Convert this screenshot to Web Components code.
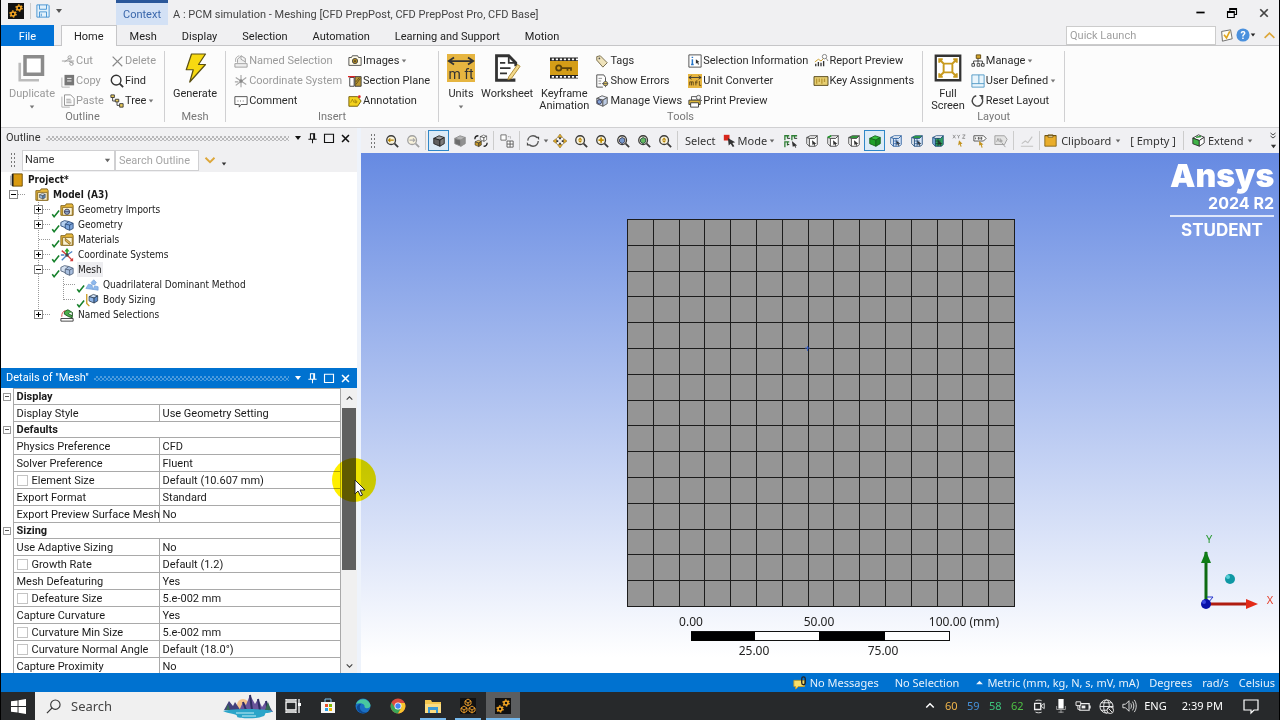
<!DOCTYPE html>
<html lang="en">
<head>
<meta charset="utf-8">
<meta name="viewport" content="width=device-width, initial-scale=1">
<title>A : PCM simulation - Meshing</title>
<style>
    html, body { height: 100%; }
    body {
        --wide-font: "Noto Sans", "Open Sans", sans-serif;
        margin: 0;
        background: #000;
        color: #222;
        font: 11px/14px Roboto, "Open Sans", sans-serif;
        overflow: hidden;
    }
    desktop-app { height: 100%; }
</style>
</head>
<body>
<desktop-app></desktop-app>

<script>
// 16x16 drawings, looked up by name
const CUBE = (top, left, right, line = '#333') =>
    `<g stroke="${line}" stroke-width="1" stroke-linejoin="round"><path fill="${top}" d="M2 5l6-3 6 2-5 3z"/><path fill="${left}" d="M2 5l7 2v7l-7-3z"/><path fill="${right}" d="M9 7l5-3v7l-5 3z"/></g>`;
const WIRE = (top, front, side, line = '#444') =>
    `<g stroke="${line}" stroke-width="1" stroke-linejoin="round"><path fill="${top}" d="M2 4l4-2h8l-3 3H5z"/><path fill="${side}" d="M2 4l3 1v9l-3-3z"/><path fill="${front}" d="M5 5h6l3-3v10l-2 2H5z"/></g><path d="M8 7l5 4-2 .3 1 2-1 .4-1-2-1.500 1z" fill="#333"/>`;
const LENS = (inner, line = '#3a3a3a') =>
    `<circle cx="7" cy="7" r="5" fill="#f8f2dc" stroke="${line}" stroke-width="1.500"/><path d="M11 11l4 4" stroke="${line}" stroke-width="2"/>${inner}`;
const FOLDER = inner =>
    `<path d="M1 14V3h5l1-2h7l1 2v11z" fill="#e8b93c" stroke="#7a5a10"/><path d="M3 5h11v9H3z" fill="#fbf3d4" stroke="#8a6a20"/>${inner}`;
const GEAR = (x, y, r) =>
    `<circle cx="${x}" cy="${y}" r="${r}" fill="none" stroke="#f5a623" stroke-width="1.500"/><circle cx="${x}" cy="${y}" r="${r + 1}" fill="none" stroke="#f5a623" stroke-width="1.500" stroke-dasharray="1.500 1.700"/>`;
const BOOK = '<path d="M3 1h11v14H3z" fill="#d99a10" stroke="#6a4c08"/><path d="M3 1v14" stroke="#222" stroke-width="2"/><path d="M1 3v11" stroke="#777"/>';
const MFT = '<path d="M0 0h16v16H0z" fill="#e6b540"/><path d="M1 4h14M4 2L1 4l3 2M12 2l3 2-3 2" stroke="#333" fill="none"/>';

const ICONS = {
    app: `<path d="M0 0h16v16H0z" fill="#111"/>${GEAR(5, 11, 2)}${GEAR(11, 5, 2)}`,
    modules: '<path d="M0 0h16v16H0z" fill="#111"/><g fill="none" stroke="#e59a2c"><path d="M8 1l3 2v3L8 8 5 6V3zM4 8l3 2v3l-3 2-3-2v-3zM12 8l3 2v3l-3 2-3-2v-3zM5 3l3 2 3-2M8 5v3M1 10l3 2 3-2M4 12v3M9 10l3 2 3-2M12 12v3"/></g>',
    save: '<path d="M1 1h13l1 1v13H1z" fill="#e3f1fb" stroke="#3c8ed0"/><path d="M4 1v5h8V1M4 15V9h8v6M6 11v3" fill="none" stroke="#3c8ed0"/>',
    duplicate: '<path d="M1 5v10h11" fill="none" stroke="#bbb" stroke-width="1.500"/><path d="M4 1.500h10v10H4z" fill="#fff" stroke="#8b8b8b" stroke-width="2"/>',
    cut: '<path d="M1 8h14M4 9l7-5M9 8l5 3" stroke="#999"/><circle cx="10" cy="4" r="2" fill="none" stroke="#999"/><circle cx="12" cy="11" r="2" fill="none" stroke="#999"/>',
    copy: '<path d="M1 4v11h9" fill="none" stroke="#aaa"/><path d="M4 1h11v12H4z" fill="#777"/><path d="M7 5h5M7 8h5" stroke="#fff"/>',
    paste: '<path d="M1 3v12h9" fill="none" stroke="#aaa"/><path d="M4 1h7l4 4v8H4z" fill="#fff" stroke="#888"/><path d="M6 6h5M6 8h6M6 10h6" stroke="#999"/>',
    delete: '<path d="M3 3l11 11M14 3L3 14" stroke="#888" stroke-width="1.300"/>',
    find: '<circle cx="7" cy="7" r="5.500" fill="none" stroke="#333" stroke-width="1.600"/><path d="M11 11l4 4" stroke="#333" stroke-width="2"/>',
    tree: '<path d="M3 4v4h4M8 9v4h4" fill="none" stroke="#333"/><path d="M1 1h4v3H1zM6 6h4v3H6zM11 11h4v4h-4z" fill="#e7c95a" stroke="#333"/>',
    bolt: '<path d="M6 0h8l-4 6h4L5 16l2-7H3z" fill="#f7d911" stroke="#5b5014" stroke-width=".7" stroke-linejoin="round"/>',
    named: '<path d="M1 11h14v4H1zM4 10V6l4-4 5 3v5M8 2v4l5 3" fill="#eee" stroke="#999"/><path d="M2 9c-1-4 1-6 4-7" fill="none" stroke="#999"/>',
    axes: '<path d="M8 1v14M2 4l12 8M2 13l12-9M1 9h4" stroke="#a5a5a5" stroke-width="1.300"/><circle cx="8" cy="8" r="2" fill="#888"/>',
    comment: '<path d="M1 3h14v9H8l-2 3v-3H1z" fill="#fff" stroke="#444"/><path d="M4 8h1M7 8h1M10 8h1" stroke="#444"/>',
    camera: '<path d="M1 4h3l1-2h6l1 2h3v9H1z" fill="#fffbe9" stroke="#444"/><circle cx="8" cy="8" r="3" fill="#b08920" stroke="#444"/><circle cx="8" cy="8" r="1" fill="#333"/>',
    section: '<path d="M2 4h5v10H2z" fill="#fff" stroke="#333"/><path d="M8 3h7v11H8z" fill="#b99734" stroke="#333"/><path d="M9 12l5-7M9 9l4-5" stroke="#5d4a12"/><path d="M0 3h8" stroke="#d22" stroke-width="1.500"/>',
    annotation: '<path d="M1 3h10l4 5-4 6H1z" fill="#f4d21d" stroke="#6d5600"/><path d="M3 10l2-4 2 4M8 6v4h2V8H8" fill="none" stroke="#8b6d00" stroke-width=".7"/><circle cx="13" cy="3" r="1.500" fill="#d22"/>',
    units: `${MFT}<text x="8" y="14" font-size="8" text-anchor="middle" fill="#333">m ft</text>`,
    unitsmall: `${MFT}<path d="M2 13V9h2v4M4 9h2v4M9 13V8h2M8 10h3M13 8v5h2" stroke="#5f4614" fill="none"/>`,
    worksheet: '<path d="M12 14v1H2V1h7l4 4v2" fill="#fff" stroke="#333" stroke-width="1.600"/><path d="M9 1v4h4M4 5h3M4 8h6M4 11h4" stroke="#333" fill="none"/><path d="M9 13l5-7 1.500 1-5 7-2 .6z" fill="#f3d98a" stroke="#a98428" stroke-width=".5"/>',
    keyframe: '<path d="M0 2h16v12H0z" fill="#222"/><path d="M0 4h16v8H0z" fill="#d49d17"/><path d="M1 3h15M1 13h15" stroke="#fff" stroke-width="1" stroke-dasharray="1.300 1"/><circle cx="5" cy="8" r="1.500" fill="none" stroke="#5a420a"/><path d="M6.500 8H12v1.500M10 8v1.500" fill="none" stroke="#5a420a"/>',
    tags: '<path d="M2 3l4-1 8 8-5 5-7-8z" fill="#efe3bb" stroke="#6b6040"/><circle cx="5" cy="5" r="1" fill="#555"/>',
    errors: '<path d="M2 1h8l2 3v4M2 1v14h7" fill="none" stroke="#444"/><path d="M4 5h4M4 8h3M4 11h3" stroke="#888"/><circle cx="12" cy="11" r="2.500" fill="#e7c95a" stroke="#555"/><path d="M12 6v3M12 13v2M8 11h7" stroke="#555"/>',
    views: CUBE('#e9eef7', '#d6dfef', '#bccbe3', '#555') + '<circle cx="5" cy="9" r="2.500" fill="#85a5d8" stroke="#335"/>',
    info: '<path d="M1 1h14v14H1z" fill="#fff" stroke="#444"/><path d="M5 6v6M5 3v1.500M3.500 12h3" stroke="#2474c8" stroke-width="1.700"/><path d="M9 6l4 3-1.500.3 1 2.500-1 .4-1-2.200L9 11z" fill="#333"/>',
    print: '<path d="M4 3h7v4H4z" fill="#fff" stroke="#444"/><path d="M1 7h13v5H1z" fill="#e0b93a" stroke="#333"/><path d="M3 10h9v5H3z" fill="#fff" stroke="#333"/><circle cx="12" cy="4" r="2.500" fill="#eee" stroke="#555"/><path d="M14 6l2 2" stroke="#555"/>',
    report: '<path d="M2 14v-3M5 14v-5M8 14v-4M11 14V8" stroke="#333" stroke-width="1.500"/><path d="M1 9l4-3 3 2 4-4" fill="none" stroke="#c79513"/><circle cx="12" cy="3" r="2.500" fill="#fff" stroke="#777"/><path d="M14 5l2 3" stroke="#777"/>',
    keys: '<path d="M0 3h16v10H0z" fill="#e7cf72" stroke="#4a3d0e"/><path d="M3 5v6M6 5v4M9 5v6M12 5v4" stroke="#b99734" stroke-width="1.500"/>',
    full: '<path d="M1 1h14v14H1z" fill="#fff" stroke="#333" stroke-width="1.300"/><g stroke="#c89a1e" fill="none" stroke-width="1.100"><path d="M5.500 5.500h5v5h-5zM3 3l3 3M13 3l-3 3M3 13l3-3M13 13l-3-3M3 5V3h2M11 3h2v2M3 11v2h2M13 11v2h-2"/></g>',
    manage: '<path d="M8 5v5M3 12V8h10v4" fill="none" stroke="#333"/><path d="M6 1h5v4H6z" fill="#d2a42c" stroke="#5a430a"/><path d="M1 11h3v3H1zM7 11h3v3H7zM12 11h3v3h-3z" fill="#fff" stroke="#333"/>',
    layout: '<path d="M1 1h14v14H1zM1 11h14M9 1v10" fill="#e9f5fc" stroke="#4a96c4"/>',
    reset: '<path d="M6 2a6 6 0 1 0 6 2" fill="none" stroke="#444" stroke-width="1.600"/><path d="M9 1h5v5z" fill="#444"/>',
    approve: '<path d="M2 3l11-2 2 11-12 3z" fill="#fffdf3" stroke="#555"/><path d="M5 7l3 4 4-8" fill="none" stroke="#e0a51c" stroke-width="2"/>',
    help: '<circle cx="8" cy="8" r="7.500" fill="#4a90dd"/><text x="8" y="12" text-anchor="middle" font-size="12" font-weight="700" fill="#fff">?</text>',
    up: '<path d="M2 11l6-6 6 6" fill="none" stroke="#dda73a" stroke-width="2"/>',
    down: '<path d="M2 5l6 6 6-6" fill="none" stroke="#dda73a" stroke-width="2.500"/>',
    chevup: '<path d="M3 10l5-5 5 5" fill="none" stroke="currentColor" stroke-width="2"/>',
    chevdown: '<path d="M3 6l5 5 5-5" fill="none" stroke="currentColor" stroke-width="2"/>',
    chevrons: '<path d="M3 2l5 4 5-4M3 8l5 4 5-4" fill="none" stroke="#333" stroke-width="1.800"/>',
    min: '<path d="M2 8h12" stroke="#000" stroke-width="2.500"/>',
    restore: '<path d="M5 5V2h9v8h-3M2 6h9v8H2z" fill="none" stroke="#000" stroke-width="1.500"/><path d="M5 3h9M2 7h9" stroke="#000" stroke-width="2"/>',
    max: '<path d="M2 3h12v11H2z" fill="none" stroke="currentColor" stroke-width="1.500"/>',
    close: '<path d="M3 3l10 10M13 3L3 13" stroke="currentColor" stroke-width="2.300"/>',
    pin: '<path d="M5 1h6v8H5zM2 9h12M8 9v6" fill="none" stroke="currentColor" stroke-width="1.500"/><path d="M10 1v8" stroke="currentColor" stroke-width="2"/>',
    caret: '<path d="M2 4h12l-6 8z" fill="currentColor"/>',
    caretup: '<path d="M2 11h12L8 5z" fill="currentColor"/>',
    book: BOOK,
    model: FOLDER(`<g transform="translate(4 5) scale(.55)">${CUBE('#cfe0f2', '#8fb0d6', '#5c86bb')}</g>`),
    imports: FOLDER('<circle cx="8" cy="10" r="3" fill="#9db7d9" stroke="#335"/><path d="M5 10h6" stroke="#335"/>'),
    geometry: `<g stroke="#2b4a78" stroke-linejoin="round"><path d="M1 5l4-2 5 1v6l-4 1-5-2z" fill="#b7d0ef"/><path d="M6 7l4-3 5 2v6l-4 2-5-2z" fill="#7da6dd"/><path d="M6 7l5 1 4-2M11 8v6" fill="none"/></g>`,
    mesh: `<g stroke="#50617c" stroke-linejoin="round"><path d="M1 5l4-2 5 1v6l-4 1-5-2z" fill="#d4e0ef"/><path d="M6 7l4-3 5 2v6l-4 2-5-2z" fill="#a9bfdf"/><path d="M6 7l5 1 4-2M11 8v6" fill="none"/></g>`,
    materials: FOLDER('<path d="M6 6l6 5-1 2-5-4z" fill="#e5b454" stroke="#8a6a20"/>'),
    coords: '<path d="M8 2v6" stroke="#2ca02c" stroke-width="2"/><path d="M5 4l3-4 3 4z" fill="#2ca02c"/><path d="M8 8l6 6M2 3l6 5" stroke="#d23c3c" stroke-width="1.500"/><path d="M8 8l-6 6M8 8l6-4M1 8h4" stroke="#4a83c4" stroke-width="1.500"/><path d="M11 15h4v-4z" fill="#d23c3c"/><circle cx="8" cy="8" r="2" fill="#444"/>',
    quad: '<path d="M1 12l3-5 4 1 1 5zM7 5l3-3 3 3-2 3-3-1zM9 13l2-4 4 1v4z" fill="#8fb9ec" stroke="#6a99d6" stroke-width=".7"/>',
    sizing: `<path d="M2 1v11l3 3" fill="none" stroke="#c89a1e" stroke-width="1.500"/><g transform="translate(3 0) scale(.82)">${CUBE('#cfe0f5', '#8fb4e6', '#5f8dcc', '#234')}</g>`,
    selections: '<path d="M1 12h14v3H1z" fill="#fff" stroke="#333"/><path d="M5 4l4-2 5 3v6l-4-1-5-3z" fill="#4cb04c" stroke="#1c4f1c"/><path d="M9 6l5 3V5" fill="#fff" stroke="#1c4f1c"/><path d="M2 10c0-4 1-6 4-7" fill="none" stroke="#d23c3c"/>',
    check: '<path d="M2 10l3 4 8-10" fill="none" stroke="#15802a" stroke-width="2.500"/>',
    prev: LENS('<path d="M4 7h6M6 5L4 7l2 2" stroke="#b98500" stroke-width="1.300" fill="none"/>'),
    next: LENS('<path d="M4 7h6M8 5l2 2-2 2" stroke="#aaa" stroke-width="1.300" fill="none"/>', '#a0a0a0'),
    cubeedge: CUBE('#9a9a9a', '#606060', '#7b7b7b', '#222'),
    cube: CUBE('#b5b5b5', '#6c6c6c', '#919191', '#8d8d8d'),
    cubes: `<g transform="translate(6 0) scale(.6)">${CUBE('#fff', '#fff', '#fff', '#222')}</g><g transform="translate(0 6) scale(.6)">${CUBE('#e6c566', '#c89a2a', '#a47c1c', '#222')}</g><path d="M1 6c0-3 1-4 4-4M15 10c0 3-1 4-4 4" fill="none" stroke="#222" stroke-width="1.500"/>`,
    grid: '<path d="M1 1h6v6H1z" fill="#fff" stroke="#666"/><path d="M8 8h7v7H8zM11.500 8v7M8 11.500h7" fill="#fff" stroke="#555"/><path d="M9 3h3v3" fill="none" stroke="#888" stroke-dasharray="1 1"/>',
    rotate: '<circle cx="8" cy="8" r="6" fill="none" stroke="#555" stroke-width="1.500" stroke-dasharray="14 4.800"/><path d="M12 3h3v4zM4 13H1V9z" fill="#444"/>',
    pan: '<path d="M8 0l3 4H5zM8 16l3-4H5zM0 8l4-3v6zM16 8l-4-3v6z" fill="#e0ab2b" stroke="#6a4f0d" stroke-width=".5"/><path d="M8 4v2M8 10v2M4 8h2M10 8h2" stroke="#333" stroke-width="2"/>',
    zoom: LENS('<path d="M7 4l2.500 2.500h-5zM7 10l2.500-2.500h-5z" fill="#b98500"/>'),
    zoombox: LENS('<path d="M7 4v6M4 7h6" stroke="#c08d00" stroke-width="2"/>'),
    zoomfit: LENS('<path d="M4 6l3-2 3 1.500V9l-3 2-3-2z" fill="#7799cc" stroke="#335"/>'),
    zoomsel: LENS('<path d="M4 6l3-2 3 1.500V9l-3 2-3-2z" fill="#63b95f" stroke="#244"/>'),
    mode: '<path d="M1 1h7v7H1z" fill="#d8261c"/><path d="M6 5l9 5-3.500 1 2.500 4-2 1-2.500-4L7 14z" fill="#333"/>',
    filter: '<g fill="none" stroke="#2f7f35" stroke-width="1.500"><path d="M1 7V2h5M9 7V2h6M1 15V9h5M4 2v3M12 2v3M4 9v4"/></g><path d="M4 5h3M12 5h3M4 12h2" stroke="#222"/><path d="M9 8l6 5-2 .3 1 2-1 .4-1-2-2 1z" fill="#333"/>',
    vertex: WIRE('#fff', '#fff', '#fff'),
    edge: WIRE('#fff', '#fff', '#fff') + '<path d="M2 4l4-2" stroke="#1f9a2a" stroke-width="2"/>',
    face: WIRE('#2fa83a', '#fff', '#fff'),
    body: CUBE('#35c03f', '#1fa12a', '#178a22', '#14621b'),
    node: WIRE('#fff', '#d9e7fa', '#fff', '#2c5f9e') + '<path d="M5 8h6M8 5v9M5 11h7" stroke="#2c5f9e" stroke-width=".8"/>',
    elface: WIRE('#2fa83a', '#d9e7fa', '#fff', '#24507f') + '<path d="M5 8h6M8 5v9M5 11h7" stroke="#24507f" stroke-width=".8"/>',
    element: WIRE('#fff', '#2fa060', '#8dbbe6', '#24507f') + '<path d="M5 8h6M8 5v9M5 11h7" stroke="#113a22" stroke-width=".8"/>',
    xyz: '<path d="M1 1l3 4M4 1L1 5M6 1l1.500 2L9 1M7.500 3v2M12 1h3l-3 4h3" stroke="#777" stroke-width=".8" fill="none"/><path d="M8 7l4 4-2 .3 1 3-1.200.4-1-3L7 13z" fill="#c3931e"/>',
    probe: '<path d="M1 2h11l3 3-3 3H1z" fill="#fff" stroke="#444"/><path d="M3 4v2M6 4h1v2H6zM9 4h1v2H9z" stroke="#444" fill="none"/><path d="M7 8l5 4-2 .3 1 3-1.200.4-1-3L7 13z" fill="#c3931e"/>',
    label: '<path d="M1 2h11l3 4-3 6H1z" fill="#e3e3e3" stroke="#999"/><path d="M3 9l1.500-4L6 9M7 5v4h2V7H7" stroke="#888" fill="none" stroke-width=".8"/><path d="M9 10l4 5" stroke="#999"/>',
    chart: '<path d="M1 14h14M2 11l4-3 3 2 5-7" fill="none" stroke="#c2c2c2" stroke-width="1.300"/>',
    clipboard: '<path d="M1 2h14v13H1z" fill="#e9ad2b" stroke="#7a5a10"/><path d="M5 1h6v3H5z" fill="#f5e9c3" stroke="#7a5a10"/><path d="M1 2h14" stroke="#5a420a"/>',
    extend: '<g stroke="#222" stroke-linejoin="round"><path fill="#fff" d="M1 5l7-4 7 3-6 4z"/><path fill="#3fb347" d="M1 5l8 3v7l-8-3z"/><path fill="#fff" d="M9 8l6-4v7l-6 4z"/></g><path d="M5 4l6-1" stroke="#2f9a38" stroke-width="2"/>',
    message: '<path d="M1 5h12v7H6l-3 3v-3H1z" fill="#f7df6a" stroke="#c79e24"/><path d="M12 1a2 2 0 0 1 2 2v5a2 2 0 0 1-4 0V3a2 2 0 0 1 2-2z" fill="none" stroke="#222" stroke-width="1.500"/>',
    windows: '<path d="M0 2.500l7-1v6H0zM8 1.300L16 0v7.500H8zM0 8.500h7v6l-7-1zM8 8.500h8V16l-8-1.300z" fill="#fff"/>',
    search: '<circle cx="10" cy="6" r="5" fill="none" stroke="#333" stroke-width="1.200"/><path d="M6.500 9.500L1 15" stroke="#333" stroke-width="1.300"/>',
    tasks: '<path d="M1 4h10v8H1zM1 1v1h10V1M1 15v-1h10v1" fill="none" stroke="#fff" stroke-width="1.300"/><path d="M14 1v14" stroke="#fff" stroke-width="1.300"/><path d="M13 5h3v3h-3z" fill="#fff"/>',
    store: '<path d="M5 4V1h6v3" fill="none" stroke="#7cc4ee"/><path d="M1 4h14v11H1z" fill="#f5f5f5"/><path d="M5 6h3v3H5z" fill="#e8502a"/><path d="M9 6h3v3H9z" fill="#7fba00"/><path d="M5 10h3v3H5z" fill="#2a9fe8"/><path d="M9 10h3v3H9z" fill="#f0b400"/>',
    edgeapp: '<circle cx="8" cy="8" r="7.500" fill="#1a6fc4"/><path d="M1 6C3 0 13-1 15.500 7c0 4-5 4-6 2 1-3-4-5-8.500-3z" fill="#49c7a0"/><path d="M6 6c-3 4 0 9 6 8.500-4 2-9 0-10-4-.5-3 2-5 4-4.500z" fill="#0c4a96"/>',
    chrome: '<circle cx="8" cy="8" r="7.500" fill="#dd4b3e"/><path d="M1.500 4.500A7.500 7.500 0 0 0 8 15.500l3.500-6L5 10z" fill="#3aa757"/><path d="M8 15.500A7.500 7.500 0 0 0 14.800 5H8l3.500 4.500z" fill="#f7c52d"/><circle cx="8" cy="8" r="3.500" fill="#fff"/><circle cx="8" cy="8" r="2.700" fill="#4285f4"/>',
    folder: '<path d="M0 2h6l1 2h9v11H0z" fill="#f4c64f"/><path d="M0 6h16v9H0z" fill="#fbdc82"/><path d="M3 9h10v6h-2v-3H5v3H3z" fill="#3c9ad6"/>',
    meet: '<path d="M3 5h7v7H3z" fill="none" stroke="#eee" stroke-width="1.500"/><path d="M10 8l4-3v6z" fill="none" stroke="#eee"/><path d="M4 2c2-1 5-1 7 0M4 15c2 1 5 1 7 0" stroke="#eee" fill="none"/>',
    mic: '<path d="M5 0h6v11H5z" fill="#fff"/><path d="M3 8v4h10V8M8 12v4M5 15h6" stroke="#aaa" fill="none"/>',
    battery: '<path d="M4 5h10v7H4zM15 7v3" fill="none" stroke="#eee" stroke-width="1.300"/><path d="M6 7h4v3H6z" fill="#eee"/><path d="M0 3h5v4H0zM2 7v4h2" stroke="#eee" fill="#272727"/>',
    globe: '<g fill="none" stroke="#eee"><circle cx="8" cy="8" r="7"/><ellipse cx="8" cy="8" rx="3" ry="7"/><path d="M1 8h14M2 4h12M2 12h8"/></g><circle cx="12" cy="12" r="3.500" fill="#272727" stroke="#eee"/><path d="M10 10l4 4" stroke="#eee"/>',
    sound: '<path d="M1 6h3l4-4v12l-4-4H1z" fill="none" stroke="#eee"/><path d="M10 5c1 2 1 4 0 6M12 3c2 3 2 7 0 10M14 1c3 4 3 10 0 14" stroke="#eee" fill="none"/>',
    notify: '<path d="M1 2h14v10h-4l-3 3v-3H1z" fill="none" stroke="#fff" stroke-width="1.200"/>'
};

// shared by every element that holds buttons or text boxes
const BASE = `
    * { box-sizing: border-box; }
    button, input, select { font: inherit; color: inherit; margin: 0; }
    button { border: 0; padding: 0; background: none; cursor: default; white-space: nowrap; }
`;

class BaseElement extends HTMLElement {
    connectedCallback() {
        if (this.shadowRoot) return;

        const template = document.createElement('template');
        template.innerHTML = `<style>${BASE}${this.styles()}</style>${this.markup()}`;
        this.attachShadow({ mode: 'open' }).appendChild(template.content.cloneNode(true));
    }

    styles() { return ''; }
    markup() { return '<slot></slot>'; }

    attr(name, fallback = '') {
        return this.getAttribute(name) || fallback;
    }
}

class UiIcon extends BaseElement {
    styles() {
        const size = this.attr('size', '14');
        return `
            :host { display: inline-flex; flex: none; vertical-align: middle; }
            svg { display: block; width: ${size}px; height: ${size}px; overflow: visible; }
        `;
    }
    markup() {
        return `<svg viewBox="0 0 16 16" aria-hidden="true">${ICONS[this.attr('name')]}</svg>`;
    }
}

// ribbon command, small (icon beside the label) or large (icon above it)
class ToolButton extends BaseElement {
    styles() {
        return `
            :host { display: flex; color: #2b2b2b; }
            :host([off]) { color: #9a9a9a; }
            button { display: flex; align-items: center; gap: 1px; height: 20px; }
            .caret { color: #777; margin-left: 1px; }
            :host([large]) button {
                flex-direction: column;
                gap: 0;
                height: 60px;
                padding-top: 3px;
                line-height: 12px;
            }
            :host([large]) .text { margin-top: 6px; }
            :host([large]) .caret { margin: 4px 0 0; }
        `;
    }
    markup() {
        const size = this.hasAttribute('large') ? 28 : 14;
        return `
            <button type="button" ${this.hasAttribute('off') ? 'disabled' : ''}>
                <ui-icon name="${this.attr('icon')}" size="${size}"></ui-icon>
                <span class="text"><slot></slot></span>
                ${this.hasAttribute('menu') ? '<ui-icon class="caret" name="caret" size="6"></ui-icon>' : ''}
            </button>`;
    }
}

class RibbonGroup extends BaseElement {
    styles() {
        return `
            :host { display: flex; flex-direction: column; padding: 0 8px; border-right: 1px solid #d0d0d2; }
            .tools { display: flex; gap: 6px; }
            .label { text-align: center; color: #777; line-height: 12px; }
            ::slotted(div) { display: flex; flex-direction: column; }
        `;
    }
    markup() {
        return `<div class="tools"><slot></slot></div><div class="label">${this.attr('label')}</div>`;
    }
}

class TitleBar extends BaseElement {
    styles() {
        return `
            :host { display: flex; align-items: stretch; height: 25px; color: #444; }
            .quick { display: flex; align-items: center; gap: 6px; width: 115px; padding: 0 7px 4px; }
            .quick i { width: 1px; height: 16px; background: #ccc; }
            .quick button { display: flex; }
            .quick ui-icon:last-child { color: #555; margin-left: -1px; }
            .context { border-top: 3px solid #2a579a; background: #d3e1f5; color: #3a67ab; padding: 5px 7px 0; }
            h1 { flex: 1; margin: 0; padding: 8px 5px 0; font: inherit; }
            .window { display: flex; align-items: center; gap: 20px; padding: 0 9px; }
            .window button { display: flex; }
        `;
    }
    markup() {
        return `
            <div class="quick">
                <ui-icon name="app" size="16"></ui-icon><i></i>
                <button type="button" aria-label="Save"><ui-icon name="save"></ui-icon></button>
                <ui-icon name="caret" size="8"></ui-icon>
            </div>
            <div class="context">Context</div>
            <h1>A : PCM simulation - Meshing [CFD PrepPost, CFD PrepPost Pro, CFD Base]</h1>
            <div class="window">
                <button type="button" aria-label="Minimize"><ui-icon name="min" size="11"></ui-icon></button>
                <button type="button" aria-label="Restore"><ui-icon name="restore" size="12"></ui-icon></button>
                <button type="button" aria-label="Close"><ui-icon name="close" size="12"></ui-icon></button>
            </div>`;
    }
}

class RibbonTabs extends BaseElement {
    styles() {
        return `
            :host { display: flex; align-items: stretch; height: 21px; border-bottom: 1px solid #c6c6c8; }
            nav { display: flex; flex: 1; gap: 1px; }
            nav button { padding: 2px 12px 0; height: 21px; }
            .file { width: 53px; margin-right: 6px; background: #0072d6; color: #fff; }
            .current { background: #fcfcfc; border: 1px solid #c6c6c8; border-bottom: 0; padding: 1px 12px 0; }
            .side { display: flex; align-items: center; gap: 3px; padding-right: 3px; }
            .side button { display: flex; align-items: center; }
            input { width: 150px; height: 19px; border: 1px solid #ccc; background: #fff; padding: 0 3px; margin-right: 1px; }
            input::placeholder { color: #a0a0a0; }
            .help + button { margin-left: 4px; }
        `;
    }
    markup() {
        const tabs = ['Mesh', 'Display', 'Selection', 'Automation', 'Learning and Support', 'Motion'];
        return `
            <nav>
                <button type="button" class="file">File</button>
                <button type="button" class="current">Home</button>
                ${tabs.map(tab => `<button type="button">${tab}</button>`).join('')}
            </nav>
            <div class="side">
                <input type="text" placeholder="Quick Launch" aria-label="Quick Launch">
                <button type="button" aria-label="Approve"><ui-icon name="approve" size="13"></ui-icon></button>
                <button type="button" class="help" aria-label="Help"><ui-icon name="help" size="14"></ui-icon><ui-icon name="caret" size="6"></ui-icon></button>
                <button type="button" aria-label="Collapse ribbon"><ui-icon name="up" size="13"></ui-icon></button>
            </div>`;
    }
}

class AppRibbon extends BaseElement {
    styles() {
        return `
            :host { display: flex; height: 82px; padding: 5px 0; background: #fcfcfc; border-bottom: 1px solid #d0d0d2; }
        `;
    }
    markup() {
        return `
            <ribbon-group label="Outline">
                <tool-button large off menu icon="duplicate">Duplicate</tool-button>
                <div><tool-button off icon="cut">Cut</tool-button><tool-button off icon="copy">Copy</tool-button><tool-button off icon="paste">Paste</tool-button></div>
                <div><tool-button off icon="delete">Delete</tool-button><tool-button icon="find">Find</tool-button><tool-button menu icon="tree">Tree</tool-button></div>
            </ribbon-group>
            <ribbon-group label="Mesh">
                <tool-button large icon="bolt">Generate</tool-button>
            </ribbon-group>
            <ribbon-group label="Insert">
                <div><tool-button off icon="named">Named Selection</tool-button><tool-button off icon="axes">Coordinate System</tool-button><tool-button icon="comment">Comment</tool-button></div>
                <div><tool-button menu icon="camera">Images</tool-button><tool-button icon="section">Section Plane</tool-button><tool-button icon="annotation">Annotation</tool-button></div>
            </ribbon-group>
            <ribbon-group label="Tools">
                <tool-button large menu icon="units">Units</tool-button>
                <tool-button large icon="worksheet">Worksheet</tool-button>
                <tool-button large icon="keyframe">Keyframe<br>Animation</tool-button>
                <div><tool-button icon="tags">Tags</tool-button><tool-button icon="errors">Show Errors</tool-button><tool-button icon="views">Manage Views</tool-button></div>
                <div><tool-button icon="info">Selection Information</tool-button><tool-button icon="unitsmall">Unit Converter</tool-button><tool-button icon="print">Print Preview</tool-button></div>
                <div><tool-button icon="report">Report Preview</tool-button><tool-button icon="keys">Key Assignments</tool-button></div>
            </ribbon-group>
            <ribbon-group label="Layout">
                <tool-button large icon="full">Full<br>Screen</tool-button>
                <div><tool-button menu icon="manage">Manage</tool-button><tool-button menu icon="layout">User Defined</tool-button><tool-button icon="reset">Reset Layout</tool-button></div>
            </ribbon-group>`;
    }
}

class DockPanel extends BaseElement {
    styles() {
        return `
            :host { display: flex; flex-direction: column; background: #f0f0f2; color: #333; min-height: 0; }
            header { display: flex; align-items: center; gap: 5px; height: 20px; padding: 0 6px 0 5px; flex: none; }
            :host([active]) header { background: #0072d0; color: #fff; }
            .grip { flex: 1; height: 5px; opacity: .3;
                background: conic-gradient(currentColor 25%, transparent 0 50%, currentColor 0 75%, transparent 0) 0 0 / 4px 4px; }
            header button { color: #111; display: flex; }
            :host([active]) header button { color: #fff; }
            .content { flex: 1; min-height: 0; display: flex; flex-direction: column; }
        `;
    }
    markup() {
        return `
            <header>
                <span>${this.attr('heading').replace(/"/g, '&quot;')}</span><span class="grip"></span>
                <button type="button" aria-label="Options"><ui-icon name="caret" size="8"></ui-icon></button>
                <button type="button" aria-label="Pin"><ui-icon name="pin" size="11"></ui-icon></button>
                <button type="button" aria-label="Maximize"><ui-icon name="max" size="12"></ui-icon></button>
                <button type="button" aria-label="Close"><ui-icon name="close" size="11"></ui-icon></button>
            </header>
            <div class="content"><slot></slot></div>`;
    }
}

class OutlineFilter extends BaseElement {
    styles() {
        return `
            :host { display: flex; align-items: center; height: 24px; padding-left: 9px; }
            .grip { width: 5px; height: 16px; margin-right: 7px; background: radial-gradient(circle, #777 0 .5px, transparent 1px) 0 0 / 3px 4px; }
            select, input { height: 21px; border: 1px solid #d0d0d2; background: #fff; border-radius: 0; }
            select { width: 93px; appearance: none; padding: 0 2px; }
            input { width: 84px; padding: 0 3px; }
            input::placeholder { color: #a5a5a5; }
            .pick { position: relative; display: flex; }
            .pick ui-icon { position: absolute; right: 4px; top: 7px; color: #666; pointer-events: none; }
            button { margin-left: 5px; display: flex; }
            .more { padding-top: 8px; }
        `;
    }
    markup() {
        return `
            <span class="grip"></span>
            <span class="pick"><select aria-label="Filter by"><option>Name</option></select><ui-icon name="caret" size="7"></ui-icon></span>
            <input type="text" placeholder="Search Outline" aria-label="Search Outline">
            <button type="button" aria-label="Expand"><ui-icon name="down" size="12"></ui-icon></button>
            <button type="button" class="more" aria-label="More"><ui-icon name="caret" size="6"></ui-icon></button>`;
    }
}

// one line of the outline; nested nodes go in the slot
class TreeNode extends BaseElement {
    styles() {
        return `
            :host { display: block; color: #1a1a1a; }
            .row { display: flex; align-items: center; height: 15px; white-space: nowrap; }
            .branch { display: flex; align-items: center; flex: none; width: 17px; height: 15px; padding-left: 5px;
                background: repeating-linear-gradient(90deg, #999 0 1px, transparent 1px 2px) 5px 7px / 12px 1px no-repeat; }
            .branch button { width: 9px; height: 9px; margin-left: -5px; border: 1px solid #888; background: #fff;
                display: flex; align-items: center; justify-content: center; }
            .branch svg { width: 5px; height: 5px; }
            .mark { flex: none; width: 9px; display: flex; padding-top: 6px; }
            .text { margin-left: 3px; padding: 0 1px; line-height: 15px; }
            :host([bold]) .text { font-weight: 700; }
            :host([current]) .text { background: #ededf0; }
            .kids {
                margin-left: 25px;
                background: repeating-linear-gradient(#999 0 1px, transparent 1px 2px) 4px 0 / 1px calc(100% - 7px) no-repeat;
            }
            :host([root]) .branch, :host([root]) .mark { display: none; }
            :host([root]) .kids { margin-left: -1px; background: none; }
        `;
    }
    markup() {
        const state = this.attr('state');
        const bars = state === 'closed' ? 'M0 2.500h5M2.500 0v5' : 'M0 2.500h5';
        return `
            <div class="row">
                <span class="branch">${state ? `<button type="button" aria-label="Toggle"><svg viewBox="0 0 5 5"><path d="${bars}" stroke="#000"/></svg></button>` : ''}</span>
                <span class="mark">${this.hasAttribute('ok') ? '<ui-icon name="check" size="10"></ui-icon>' : ''}</span>
                <ui-icon name="${this.attr('icon')}" size="14"></ui-icon>
                <span class="text">${this.attr('label')}</span>
            </div>
            <div class="kids"><slot></slot></div>`;
    }
}

class OutlineTree extends BaseElement {
    styles() {
        return `:host { display: block; flex: 1; background: #fff; padding: 0 9px; overflow: hidden; font-family: "DejaVu Sans Condensed", "DejaVu Sans", sans-serif; font-size: 10px; }`;
    }
    markup() {
        return `
            <tree-node root bold icon="book" label="Project*">
                <tree-node bold state="open" icon="model" label="Model (A3)">
                    <tree-node ok state="closed" icon="imports" label="Geometry Imports"></tree-node>
                    <tree-node ok state="closed" icon="geometry" label="Geometry"></tree-node>
                    <tree-node ok icon="materials" label="Materials"></tree-node>
                    <tree-node ok state="closed" icon="coords" label="Coordinate Systems"></tree-node>
                    <tree-node ok current state="open" icon="mesh" label="Mesh">
                        <tree-node ok icon="quad" label="Quadrilateral Dominant Method"></tree-node>
                        <tree-node ok icon="sizing" label="Body Sizing"></tree-node>
                    </tree-node>
                    <tree-node state="closed" icon="selections" label="Named Selections"></tree-node>
                </tree-node>
            </tree-node>`;
    }
}

const DETAILS = [
    ['Display'],
    ['Display Style', 'Use Geometry Setting'],
    ['Defaults'],
    ['Physics Preference', 'CFD'],
    ['Solver Preference', 'Fluent'],
    ['Element Size', 'Default (10.607 mm)', true],
    ['Export Format', 'Standard'],
    ['Export Preview Surface Mesh', 'No'],
    ['Sizing'],
    ['Use Adaptive Sizing', 'No'],
    ['Growth Rate', 'Default (1.2)', true],
    ['Mesh Defeaturing', 'Yes'],
    ['Defeature Size', '5.e-002 mm', true],
    ['Capture Curvature', 'Yes'],
    ['Curvature Min Size', '5.e-002 mm', true],
    ['Curvature Normal Angle', 'Default (18.0°)', true],
    ['Capture Proximity', 'No']
];

class DetailsGrid extends BaseElement {
    styles() {
        return `
            :host { display: flex; flex: 1; min-height: 0; background: #fff; color: #1a1a1a; }
            .scroll { flex: 1; overflow: hidden; }
            table { width: 100%; border-collapse: collapse; table-layout: fixed; }
            tr { height: 17px; }
            tr.section { height: 16px; }
            td, th { padding: 0 3px; line-height: 15px; text-align: left; font-weight: 400; white-space: nowrap; border: 1px solid #a9a9a9; border-right: 0; }
            .section th { font-weight: 700; line-height: 14px; }
            .gutter { width: 12px; padding: 0 0 0 2px; border: 0; }
            .gutter button { display: block; width: 8px; height: 8px; border: 1px solid #999; background: linear-gradient(#555, #555) center / 4px 1px no-repeat; }
            .name { width: 146px; }
            label { display: flex; align-items: center; gap: 4px; }
            input { appearance: none; width: 11px; height: 11px; border: 1px solid #c4c4c4; background: #fff; }
            .rail { width: 17px; display: flex; flex-direction: column; align-items: center; background: #f0f0f0; color: #444; border-left: 1px solid #a9a9a9; }
            .rail button { height: 20px; }
            .thumb { width: 14px; height: 162px; background: #606060; }
            .rail button:last-child { margin-top: auto; height: 16px; }
        `;
    }
    markup() {
        const rows = DETAILS.map(([name, value, box]) => {
            if (!value) {
                return `<tr class="section"><td class="gutter"><button type="button" aria-label="Toggle ${name}"></button></td><th colspan="2">${name}</th></tr>`;
            }
            const title = box ? `<label><input type="checkbox">${name}</label>` : name;
            return `<tr><td class="gutter"></td><td>${title}</td><td>${value}</td></tr>`;
        });
        return `
            <div class="scroll"><table>
                <colgroup><col class="gutter"><col class="name"><col></colgroup>
                <tbody>${rows.join('')}</tbody>
            </table></div>
            <div class="rail">
                <button type="button" aria-label="Scroll up"><ui-icon name="chevup" size="9"></ui-icon></button>
                <div class="thumb"></div>
                <button type="button" aria-label="Scroll down"><ui-icon name="chevdown" size="9"></ui-icon></button>
            </div>`;
    }
}

class ViewBar extends BaseElement {
    styles() {
        return `
            :host { display: flex; align-items: center; height: 25px; background: #f0f0f3; color: #333; padding: 0 2px 0 9px; white-space: nowrap; font-family: var(--wide-font); }
            .grip { width: 5px; height: 16px; margin-right: 6px; background: radial-gradient(circle, #777 0 .5px, transparent 1px) 0 0 / 3px 4px; }
            .tool { display: flex; align-items: center; justify-content: center; width: 21px; height: 21px; flex: none; }
            .on { border: 1px solid #2f87c8; background: #dcebf7; }
            .sep { width: 1px; height: 19px; background: #ccc; margin: 0 2px; }
            .text { display: flex; align-items: center; gap: 2px; }
            .clip { gap: 4px; padding-left: 2px; }
            .extend { gap: 3px; padding-left: 6px; }
            .small { color: #666; }
            .pad { padding: 0 7px 0 5px; }
            .empty { padding: 0 5px 0 9px; }
            .more { margin-left: auto; display: flex; flex-direction: column; align-items: center; gap: 3px; }
        `;
    }
    markup() {
        const tools = (names, on) => names.split(' ').map(name =>
            `<button type="button" class="tool ${name === on ? 'on' : ''}" aria-label="${name}"><ui-icon name="${name}" size="14"></ui-icon></button>`).join('');
        const sep = '<span class="sep"></span>';
        const caret = '<ui-icon class="small" name="caret" size="6"></ui-icon>';
        return `
            <span class="grip"></span>
            ${tools('prev next')}${sep}${tools('cubeedge cube cubes', 'cubeedge')}${sep}${tools('grid')}${sep}
            ${tools('rotate')}${caret}${tools('pan zoom zoombox zoomfit zoomsel zoom')}${sep}
            <span class="pad">Select</span>
            <button type="button" class="text"><ui-icon name="mode" size="13"></ui-icon>Mode${caret}</button>
            <span class="sep" style="visibility: hidden"></span>
            ${tools('filter vertex edge face body node elface element xyz probe label', 'body')}${sep}${tools('chart')}${sep}
            <button type="button" class="text clip"><ui-icon name="clipboard" size="13"></ui-icon>Clipboard${caret}</button>
            <span class="empty">[ Empty ]</span>${sep}
            <button type="button" class="text extend"><ui-icon name="extend" size="13"></ui-icon>Extend${caret}</button>
            <button type="button" class="more" aria-label="More tools"><ui-icon name="chevrons" size="8"></ui-icon><ui-icon name="caret" size="7"></ui-icon></button>`;
    }
}

class ModelView extends BaseElement {
    styles() {
        return `
            :host { position: relative; display: flex; flex-direction: column; align-items: center; flex: 1; min-height: 0;
                padding: 66px 0 0 2px; background: linear-gradient(#668ae2, #fff 97%); color: #222; font-family: var(--wide-font); }
            .mesh { width: 388px; height: 388px; flex: none; }
            .scale { margin-top: 8px; width: 388px; height: 46px; overflow: visible; flex: none; }
            .brand { position: absolute; top: 5px; right: 5px; width: 104px; color: #fff; text-align: right; font-family: Inter, sans-serif; font-weight: 700; }
            .brand b { display: block; font-size: 32px; line-height: 35px; }
            .brand span { display: block; font-size: 16px; line-height: 20px; padding-bottom: 2px; border-bottom: 2px solid #dfe7fa; }
            .brand em { display: block; font-style: normal; font-size: 17px; line-height: 26px; text-align: center; }
            .triad { position: absolute; right: 4px; bottom: 55px; width: 76px; height: 86px; overflow: visible; }
        `;
    }
    markup() {
        const count = 15;
        let lines = '';
        for (let i = 0; i <= count; i++) {
            const at = Math.round(i * 387 / count) + 0.5;
            lines += `M${at} 0v388M0 ${at}h388`;
        }
        return `
            <svg class="mesh" viewBox="0 0 388 388">
                <rect width="388" height="388" fill="#959595"/>
                <path d="${lines}" stroke="#1c1c1c" fill="none"/>
                <path d="M178 129h5M180.500 127v5" stroke="#3b62c4"/>
            </svg>
            <svg class="scale" viewBox="0 0 388 46" font-size="12" text-anchor="middle" fill="#222">
                <text x="64" y="11">0.00</text>
                <text x="192" y="11">50.00</text>
                <text x="337" y="11">100.00 (mm)</text>
                <rect x="64.500" y="16.500" width="258" height="9" fill="#fff" stroke="#111"/>
                <path d="M64 17h64v9H64zM192 17h66v9h-66z" fill="#000"/>
                <text x="127" y="40">25.00</text>
                <text x="256" y="40">75.00</text>
            </svg>
            <div class="brand"><b>Ansys</b><span>2024 R2</span><em>STUDENT</em></div>
            <svg class="triad" viewBox="0 0 76 86" font-size="11" text-anchor="middle">
                <path d="M7 20v52" stroke="#0d6b12" stroke-width="3"/>
                <path d="M7 19l5 12H2z" fill="#0f7d16"/>
                <path d="M7 72h42" stroke="#b01c10" stroke-width="3"/>
                <path d="M59 72l-12-5v10z" fill="#e32a18"/>
                <path d="M8 65h6l-5 6" stroke="#2233cc" fill="none"/>
                <circle cx="7" cy="72" r="5" fill="#0a12a8"/>
                <circle cx="5" cy="70" r="2" fill="#3a48e0"/>
                <circle cx="31" cy="47" r="5" fill="#0f98a4"/>
                <circle cx="29" cy="45" r="2" fill="#5ad0d8"/>
                <text x="10" y="11" fill="#2c9a34">Y</text>
                <text x="71" y="72" fill="#e5402c">X</text>
            </svg>`;
    }
}

class StatusBar extends BaseElement {
    styles() {
        return `
            :host { display: flex; align-items: center; justify-content: flex-end; gap: 10px; height: 19px; padding-right: 4px; background: #0072d0; color: #e8f2fb; white-space: nowrap; font-family: var(--wide-font); }
            span { display: flex; align-items: center; gap: 3px; }
            .wide { margin-right: 6px; }
        `;
    }
    markup() {
        return `
            <span class="wide"><ui-icon name="message" size="14"></ui-icon>No Messages</span>
            <span class="wide">No Selection</span>
            <span><ui-icon name="caretup" size="9"></ui-icon>Metric (mm, kg, N, s, mV, mA)</span>
            <span>Degrees</span><span>rad/s</span><span>Celsius</span>`;
    }
}

class TaskBar extends BaseElement {
    styles() {
        return `
            :host { display: flex; align-items: stretch; height: 28px; background: #27292b; color: #fff; font-family: var(--wide-font); }
            .start { width: 34px; display: flex; align-items: center; justify-content: center; }
            .search { display: flex; align-items: center; gap: 8px; width: 241px; padding: 0 2px 0 11px; background: #f0f0f0; color: #444; }
            .search input { flex: 1; min-width: 0; border: 0; background: none; font-size: 13px; line-height: 20px; }
            .search input::placeholder { color: #444; opacity: 1; }
            .search svg { width: 52px; height: 25px; flex: none; }
            .apps { display: flex; gap: 1px; }
            .apps button { width: 34px; display: flex; align-items: center; justify-content: center; }
            .open { background: linear-gradient(#76b9ed, #76b9ed) center bottom / 26px 2px no-repeat; }
            .active { background: linear-gradient(#76b9ed, #76b9ed) center bottom / 34px 2px no-repeat #5c5e60; }
            .tray { margin-left: auto; display: flex; align-items: center; gap: 8px; padding-right: 20px; }
            .temp { width: 14px; text-align: center; }
            .clock { margin: 0 12px 0 7px; }
        `;
    }
    markup() {
        const apps = [['tasks', ''], ['store', ''], ['edgeapp', ''], ['chrome', ''], ['folder', 'open'], ['modules', 'open'], ['app', 'active']];
        const temps = [[60, '#f0b54a'], [59, '#4590d8'], [58, '#3cc47c'], [62, '#4fc044']];
        return `
            <button type="button" class="start" aria-label="Start"><ui-icon name="windows" size="15"></ui-icon></button>
            <label class="search">
                <ui-icon name="search" size="15"></ui-icon>
                <input type="text" placeholder="Search" aria-label="Search">
                <svg viewBox="0 0 52 25">
                    <circle cx="21" cy="11" r="6" fill="#f6c38a"/>
                    <path d="M2 16l5-9 4 5 2-4 6 9z" fill="#43417c"/>
                    <path d="M17 17l4-9 3 3 4-10 5 9 3-5 4 8 4-6 7 11z" fill="#6b559c"/>
                    <path d="M21 8l3 8M28 1l2 15M36 5l2 12M44 7l2 10" stroke="#2f2e62" stroke-width="2"/>
                    <path d="M1 17c8-2 40-3 50 0-4 3-9 1-8 4-3 4-24 4-28 2 2-3-8-3-14-6z" fill="#2ba5c9"/>
                    <path d="M14 19h18M20 22h14" stroke="#c5eef6"/>
                    <path d="M4 16l2-6 2 6zM43 16l3-8 3 8z" fill="#356b52"/>
                </svg>
            </label>
            <div class="apps">${apps.map(([name, state]) =>
                `<button type="button" class="${state}" aria-label="${name}"><ui-icon name="${name}" size="16"></ui-icon></button>`).join('')}</div>
            <div class="tray">
                <ui-icon name="chevup" size="12"></ui-icon>
                ${temps.map(([value, color]) => `<span class="temp" style="color: ${color}">${value}</span>`).join('')}
                <ui-icon name="meet" size="14"></ui-icon><ui-icon name="mic" size="14"></ui-icon>
                <ui-icon name="battery" size="15"></ui-icon><ui-icon name="globe" size="15"></ui-icon>
                <ui-icon name="sound" size="14"></ui-icon>
                <span>ENG</span><span class="clock">2:39 PM</span>
                <ui-icon name="notify" size="16"></ui-icon>
            </div>`;
    }
}

class DesktopApp extends BaseElement {
    styles() {
        return `
            :host { position: relative; display: flex; flex-direction: column; padding: 0 1px; background: #000; }
            .top { background: #f0f0f2; }
            .work { display: flex; flex: 1; min-height: 0; background: #eef3fb; }
            .docks { display: flex; flex-direction: column; width: 356px; margin-right: 4px; }
            .outline { height: 240px; }
            .details { flex: 1; }
            .view { display: flex; flex-direction: column; flex: 1; min-width: 0; }
            .pointer { position: absolute; left: 332px; top: 458px; width: 44px; height: 44px; border-radius: 50%; background: #ffef00; mix-blend-mode: multiply; }
            .arrow { position: absolute; left: 354px; top: 479px; width: 12px; height: 18px; }
        `;
    }
    markup() {
        return `
            <div class="top"><title-bar></title-bar><ribbon-tabs></ribbon-tabs></div>
            <app-ribbon></app-ribbon>
            <div class="work">
                <div class="docks">
                    <dock-panel class="outline" heading="Outline"><outline-filter></outline-filter><outline-tree></outline-tree></dock-panel>
                    <dock-panel class="details" active heading='Details of "Mesh"'><details-grid></details-grid></dock-panel>
                </div>
                <div class="view"><view-bar></view-bar><model-view></model-view></div>
            </div>
            <status-bar></status-bar>
            <task-bar></task-bar>
            <div class="pointer"></div>
            <svg class="arrow" viewBox="0 0 12 18"><path d="M1 1v14l3-3 2.500 5 2-1L6 11h5z" fill="#fff" stroke="#222"/></svg>`;
    }
}

customElements.define('ui-icon', UiIcon);
customElements.define('tool-button', ToolButton);
customElements.define('ribbon-group', RibbonGroup);
customElements.define('title-bar', TitleBar);
customElements.define('ribbon-tabs', RibbonTabs);
customElements.define('app-ribbon', AppRibbon);
customElements.define('dock-panel', DockPanel);
customElements.define('outline-filter', OutlineFilter);
customElements.define('tree-node', TreeNode);
customElements.define('outline-tree', OutlineTree);
customElements.define('details-grid', DetailsGrid);
customElements.define('view-bar', ViewBar);
customElements.define('model-view', ModelView);
customElements.define('status-bar', StatusBar);
customElements.define('task-bar', TaskBar);
customElements.define('desktop-app', DesktopApp);
</script>
</body>
</html>
